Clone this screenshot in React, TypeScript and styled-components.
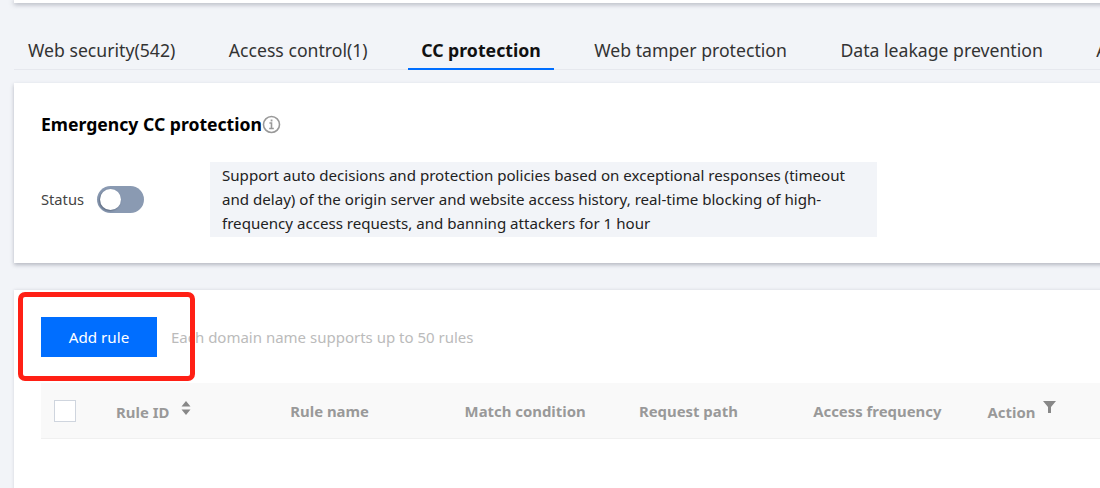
import styled, { createGlobalStyle } from "styled-components";

const GlobalStyle = createGlobalStyle`
  html, body {
    margin: 0;
    padding: 0;
    height: 100%;
    background: #f2f4f8;
    overflow: hidden;
  }
  * {
    box-sizing: border-box;
  }
`;

const Page = styled.div`
  position: relative;
  width: 1100px;
  height: 488px;
  padding-left: 14px;
  overflow: hidden;
  font-family: "Noto Sans", "Open Sans", sans-serif;
  color: #222;
`;

const TopBar = styled.div`
  height: 3px;
  margin-right: -40px;
  background: #fff;
  box-shadow: 0 1px 5px rgba(54, 58, 80, 0.5);
`;

const Tabs = styled.ul`
  display: flex;
  gap: 27.5px;
  width: 1200px;
  height: 40px;
  list-style: none;
  margin: 27px 0 0;
  padding: 0 0 0 1px;
  border-bottom: 1px solid #e6e8ee;
`;

const Tab = styled.li<{ $active?: boolean }>`
  flex: none;
  height: 40px;
  padding: 0 13px;
  font-size: ${(p) => (p.$active ? 17.7 : 17.65)}px;
  line-height: 41px;
  white-space: nowrap;
  font-weight: ${(p) => (p.$active ? 700 : 400)};
  color: ${(p) => (p.$active ? "#111" : "#333")};
  border-bottom: ${(p) => (p.$active ? "2px solid #006eff" : "none")};
`;

const Card = styled.section`
  width: 1160px;
  height: 180px;
  margin-top: 13px;
  padding: 28px 27px;
  background: #fff;
  box-shadow: 0 2px 4px rgba(54, 58, 80, 0.32);
`;

const Title = styled.h2`
  display: flex;
  align-items: center;
  margin: 0;
  height: 26px;
  font-size: 17.6px;
  font-weight: 700;
  color: #000;
`;

const StatusRow = styled.div`
  display: flex;
  align-items: center;
  margin-top: 25px;
`;

const StatusLabel = styled.span`
  width: 56px;
  padding-bottom: 2px;
  font-size: 14.7px;
  color: #444;
`;

const Toggle = styled.span`
  position: relative;
  width: 47px;
  height: 27px;
  border-radius: 14px;
  background: #8a9ab2;
  &::after {
    content: "";
    position: absolute;
    left: 3px;
    top: 3px;
    width: 21px;
    height: 21px;
    border-radius: 50%;
    background: #fff;
    box-shadow: -1px 1px 2px rgba(40, 50, 70, 0.45);
  }
`;

const Note = styled.p`
  width: 667px;
  height: 75px;
  margin: 0 0 0 66px;
  padding: 1px 12px;
  background: #f2f4f8;
  font-size: 15.1px;
  line-height: 24px;
  color: #222;
`;

const RulesCard = styled.section`
  width: 1160px;
  height: 220px;
  margin-top: 27px;
  padding: 27px 27px 0;
  background: #fff;
  box-shadow: 0 0 3px rgba(54, 58, 80, 0.16);
`;

const Toolbar = styled.div`
  display: flex;
  align-items: center;
  gap: 14px;
  height: 40px;
`;

const AddButton = styled.button`
  width: 116px;
  height: 40px;
  padding: 0;
  border: 0;
  background: #006eff;
  color: #fff;
  font-family: inherit;
  font-size: 15.2px;
`;

const Hint = styled.span`
  font-size: 15px;
  color: #bbb;
`;

const TableHead = styled.div`
  display: grid;
  grid-template-columns: 75px repeat(6, 174.3px);
  align-items: center;
  height: 56px;
  margin-top: 26px;
  background: #f9f9f9;
  border-bottom: 1px solid #f0f0f0;
`;

const CheckCell = styled.div`
  padding-left: 13px;
  display: flex;
`;

const Checkbox = styled.span`
  width: 22px;
  height: 22px;
  background: #fff;
  border: 1px solid #cfd5de;
`;

const HeadCell = styled.div<{ $drop?: boolean }>`
  display: flex;
  align-items: flex-start;
  font-size: 14.9px;
  font-weight: 700;
  color: #999;
  white-space: nowrap;
  padding-top: ${(p) => (p.$drop ? 2 : 0)}px;
`;

const HeadIcon = styled.svg<{ $gap: number }>`
  margin-left: ${(p) => p.$gap}px;
  margin-top: -1px;
  fill: #888;
`;

const Highlight = styled.div`
  position: absolute;
  left: 18px;
  top: 292px;
  width: 177px;
  height: 89px;
  border: 5px solid #ff2015;
  border-radius: 7px;
`;

const InfoIcon = () => (
  <svg width="19" height="19" viewBox="0 0 18 18" fill="none" stroke="#999">
    <circle cx="9" cy="9" r="7.6" strokeWidth="1.5" />
    <rect x="8.2" y="4.3" width="1.7" height="1.8" fill="#999" stroke="none" />
    <path d="M7 7.6h2v5M6.8 12.8h4.4" strokeWidth="1.5" />
  </svg>
);

const tabs = [
  "Web security(542)",
  "Access control(1)",
  "CC protection",
  "Web tamper protection",
  "Data leakage prevention",
  "Access",
];

function App() {
  return (
    <Page>
      <GlobalStyle />
      <TopBar />
      <Tabs>
        {tabs.map((tab) => (
          <Tab key={tab} $active={tab === "CC protection"}>
            {tab}
          </Tab>
        ))}
      </Tabs>
      <Card>
        <Title>
          Emergency CC protection
          <InfoIcon />
        </Title>
        <StatusRow>
          <StatusLabel>Status</StatusLabel>
          <Toggle />
          <Note>
            Support auto decisions and protection policies based on exceptional responses (timeout
            and delay) of the origin server and website access history, real-time blocking of high-frequency
            access requests, and banning attackers for 1 hour
          </Note>
        </StatusRow>
      </Card>
      <RulesCard>
        <Toolbar>
          <AddButton>Add rule</AddButton>
          <Hint>Each domain name supports up to 50 rules</Hint>
        </Toolbar>
        <TableHead>
          <CheckCell>
            <Checkbox />
          </CheckCell>
          <HeadCell $drop>
            Rule ID
            <HeadIcon $gap={12} width="10" height="14" viewBox="0 0 10 14">
              <path d="M5 0l4.5 5.5h-9zM5 14L.5 8.5h9z" />
            </HeadIcon>
          </HeadCell>
          <HeadCell>Rule name</HeadCell>
          <HeadCell>Match condition</HeadCell>
          <HeadCell>Request path</HeadCell>
          <HeadCell>Access frequency</HeadCell>
          <HeadCell $drop>
            Action
            <HeadIcon $gap={8} width="13" height="13" viewBox="0 0 13 13">
              <path d="M0 0h13L8 6v6H5V6z" />
            </HeadIcon>
          </HeadCell>
        </TableHead>
      </RulesCard>
      <Highlight />
    </Page>
  );
}

export default App;
